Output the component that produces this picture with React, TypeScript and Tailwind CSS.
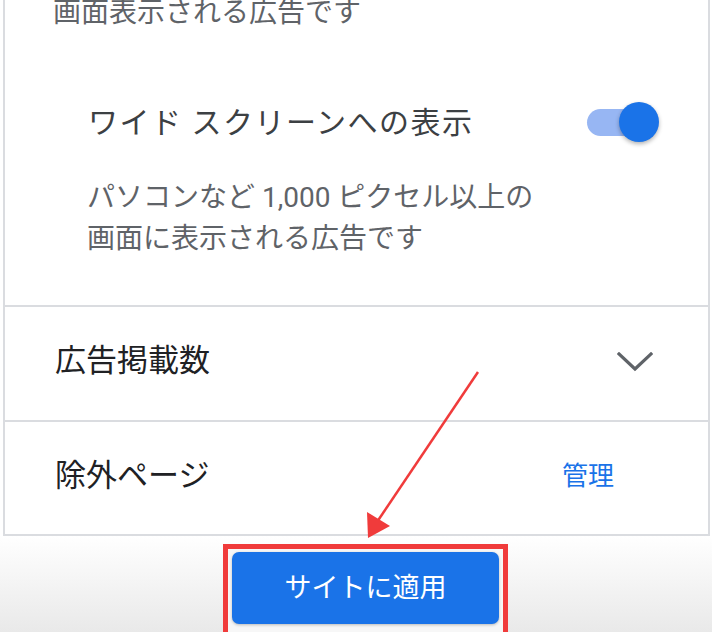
import React from "react";

const font = { fontFamily: 'Roboto, "Noto Sans CJK JP", sans-serif' };

const Toggle = () => (
  <div className="relative w-[72px] h-[40px]">
    <div className="absolute left-0 top-[7px] w-[60px] h-[27px] rounded-full bg-[#97b6f3]" />
    <div className="absolute right-0 top-0 w-[40px] h-[40px] rounded-full bg-[#1a73e8] shadow-[0_2px_4px_rgba(0,0,0,0.3)]" />
  </div>
);

const Chevron = () => (
  <svg width="36" height="20" viewBox="0 0 36 20" fill="none">
    <polyline
      points="2,2 18,17 34,2"
      stroke="#5f6368"
      strokeWidth="3.2"
      strokeLinecap="square"
    />
  </svg>
);

const Arrow = () => (
  <svg
    className="absolute left-0 top-0 pointer-events-none"
    width="712"
    height="632"
    viewBox="0 0 712 632"
  >
    <line x1="478" y1="372" x2="377" y2="522" stroke="#f03b3b" strokeWidth="2.5" />
    <polygon points="368,538 367,512 390,526" fill="#f03b3b" />
  </svg>
);

export default function App() {
  return (
    <div
      className="relative w-[712px] h-[632px] overflow-hidden bg-white"
      style={font}
    >
      {/* card */}
      <div className="ml-[3px] w-[707px] border-x-2 border-[#dadce0]">
        <div className="h-[307px] overflow-hidden border-b-2 border-[#dadce0] pl-[48px] pr-[49px]">
          <p className="-mt-[8px] text-[28px] leading-[41px] text-[#5f6368]">
            画面表示される広告です
          </p>
          <div className="mt-[68px] pl-[35px] flex items-center justify-between h-[42px]">
            <span className="text-[30px] tracking-[1.5px] text-[#3c4043]">
              ワイド スクリーンへの表示
            </span>
            <Toggle />
          </div>
          <p className="mt-[34px] pl-[34px] text-[28px] leading-[41px] text-[#5f6368]">
            パソコンなど 1,000 ピクセル以上の
            <br />
            画面に表示される広告です
          </p>
        </div>

        <div className="h-[115px] border-b-2 border-[#dadce0] pl-[50px] pr-[55px] pb-[4px] flex items-center justify-between">
          <span className="text-[31px] text-[#202124]">広告掲載数</span>
          <Chevron />
        </div>

        <div className="h-[114px] border-b-2 border-[#dadce0] pl-[50px] pr-[94px] pb-[4px] flex items-center justify-between">
          <span className="text-[31px] text-[#202124]">除外ページ</span>
          <span className="text-[26px] text-[#1a73e8]">管理</span>
        </div>
      </div>

      {/* footer */}
      <div className="h-[96px] bg-gradient-to-b from-white to-[#e9e9e9] pt-[8px]">
        <div className="ml-[223px] w-[285px] h-[100px] border-[5px] border-[#f03b3b] bg-[#f7f7f7] px-[4px] pt-[3px]">
          <button className="w-full h-[72px] rounded-[7px] bg-[#1a73e8] text-white text-[27px] shadow-[0_1px_3px_rgba(0,0,0,0.25)]">
            サイトに適用
          </button>
        </div>
      </div>

      <Arrow />
    </div>
  );
}
